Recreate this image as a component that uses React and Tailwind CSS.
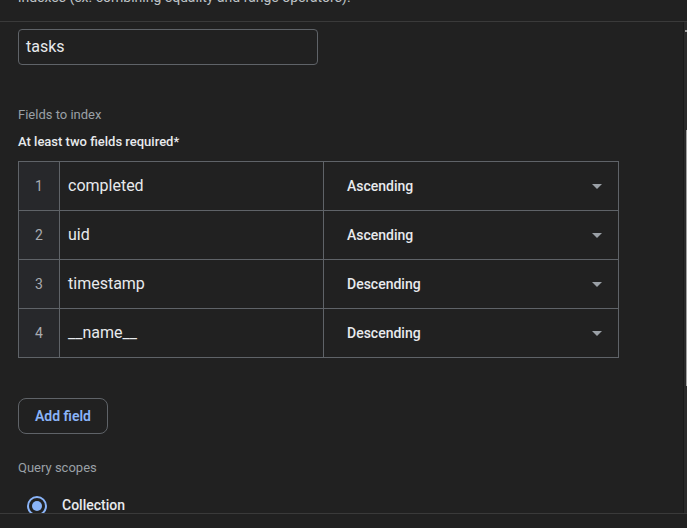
import React from "react";

const rows = [
  { n: 1, field: "completed", dir: "Ascending" },
  { n: 2, field: "uid", dir: "Ascending" },
  { n: 3, field: "timestamp", dir: "Descending" },
  { n: 4, field: "__name__", dir: "Descending" },
];

function Caret() {
  return (
    <svg width="10" height="5" viewBox="0 0 10 5" className="shrink-0">
      <path d="M0 0 L10 0 L5 5 Z" fill="#9aa0a6" />
    </svg>
  );
}

export default function App() {
  return (
    <div
      className="w-[687px] h-[528px] bg-[#212121] overflow-hidden flex flex-col text-[#e8eaed]"
      style={{ fontFamily: "Roboto, 'Noto Sans', sans-serif" }}
    >
      {/* header */}
      <div className="h-[22px] shrink-0 border-b border-[#3a3a3a] overflow-hidden pl-[18px]">
        <div className="text-[14px] leading-[20px] text-[#bdc1c6] mt-[-13px] whitespace-nowrap">
          indexes (ex. combining equality and range operators).
        </div>
      </div>

      {/* main */}
      <div className="flex-1 flex min-h-0">
        <div className="flex-1 overflow-hidden pl-[18px] pt-[7px]">
          <div className="w-[300px] h-[36px] border border-[#5f6368] rounded-[4px] flex items-center px-[7px] text-[16px]">
            tasks
          </div>

          <div className="mt-[40px] text-[13px] leading-[20px] text-[#9aa0a6]">Fields to index</div>
          <div className="mt-[9px] text-[13px] leading-[16px] font-medium text-[#e8eaed]">
            At least two fields required*
          </div>

          <div className="mt-[11px] w-[601px] border border-[#5f6368]">
            {rows.map((r, i) => (
              <div
                key={r.n}
                className={
                  "flex " + (i > 0 ? "h-[49px] border-t border-[#5f6368]" : "h-[48px]")
                }
              >
                <div className="w-[41px] shrink-0 bg-[#27282b] border-r border-[#5f6368] flex items-center justify-center text-[14px] text-[#a8abb0]">
                  {r.n}
                </div>
                <div className="w-[264px] shrink-0 border-r border-[#5f6368] flex items-center pl-[8px] text-[16px] text-[#e8eaed]">
                  {r.field}
                </div>
                <div className="flex-1 flex items-center pl-[23px] pr-[16px] justify-between text-[14px] font-medium text-[#e8eaed]">
                  <span>{r.dir}</span>
                  <Caret />
                </div>
              </div>
            ))}
          </div>

          <button className="mt-[40px] h-[36px] px-[16px] border border-[#5f6368] rounded-[8px] text-[14px] font-semibold text-[#8ab4f8] flex items-center">
            Add field
          </button>

          <div className="mt-[24px] text-[13px] leading-[20px] text-[#9aa0a6]">Query scopes</div>

          <div className="mt-[17px] flex items-center pl-[9px]">
            <div className="w-[20px] h-[20px] rounded-full border-2 border-[#8ab4f8] flex items-center justify-center">
              <div className="w-[10px] h-[10px] rounded-full bg-[#8ab4f8]" />
            </div>
            <span className="ml-[15px] text-[14px] font-medium text-[#e8eaed]">Collection</span>
          </div>
        </div>

        {/* scrollbar */}
        <div className="w-[4px] shrink-0 bg-[#2a2a2a] border-l border-[#1a1a1a] flex flex-col items-end py-[8px]">
          <div className="w-[2px] h-[2px] bg-[#9e9e9e]" />
          <div className="w-[1px] h-[256px] bg-[#a0a0a0] mt-[98px]" />
        </div>
      </div>

      {/* footer */}
      <div className="h-[15px] shrink-0 border-t border-[#3a3a3a] bg-[#212121]" />
    </div>
  );
}
